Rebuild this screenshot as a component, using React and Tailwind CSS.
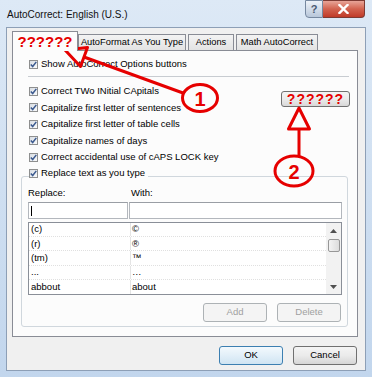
import React from 'react';

const Check = () => (
  <span className="flex h-[9px] w-[9px] shrink-0 items-center justify-center border border-[#8e8f8f] bg-linear-to-br from-[#d8dde3] to-[#fafbfc]">
    <svg width="7" height="7" viewBox="0 0 7 7">
      <path d="M0.8 3.4 L2.7 5.5 L6.3 0.9" fill="none" stroke="#3c5a8f" strokeWidth="1.5" />
    </svg>
  </span>
);

const CheckRow = ({ label }) => (
  <div className="flex h-[16.5px] items-center gap-[3px]">
    <Check />
    <span className="whitespace-nowrap">{label}</span>
  </div>
);

const Tab = ({ label, w, className }) => (
  <div
    className={`flex h-[16px] items-center justify-center whitespace-nowrap border border-b-0 border-[#898c95] bg-linear-to-b from-[#f3f3f3] to-[#e3e3e3] text-[9.3px] ${w} ${className || ''}`}
  >
    {label}
  </div>
);

const rows = [
  ['(c)', '©'],
  ['(r)', '®'],
  ['(tm)', '™'],
  ['...', '…'],
  ['abbout', 'about'],
];

const Annotations = () => (
  <svg className="pointer-events-none absolute left-0 top-0" width="372" height="377" viewBox="0 0 372 377">
    <g fill="none" stroke="#e60000" strokeWidth="3" strokeLinejoin="round">
      {/* arrow 1 */}
      <path d="M65 50 L87.5 47.5 L80.5 66.5 Z" />
      <path d="M84 57 L183 93" />
      <ellipse cx="200" cy="98" rx="17.5" ry="13.5" />
      {/* arrow 2 */}
      <path d="M299 108 L309.5 129 L288.5 129 Z" />
      <path d="M299 129 L299 156" />
      <ellipse cx="294" cy="171" rx="19" ry="15" />
    </g>
    <text x="200" y="105.5" textAnchor="middle" fontFamily="Liberation Sans, Arial, sans-serif" fontWeight="bold" fontSize="20" fill="#e60000">1</text>
    <text x="294" y="178.5" textAnchor="middle" fontFamily="Liberation Sans, Arial, sans-serif" fontWeight="bold" fontSize="20" fill="#e60000">2</text>
  </svg>
);

export default function App() {
  return (
    <div className="relative h-[377px] w-[372px] overflow-hidden bg-linear-to-b from-[#dde9f6] via-[#cfdff1] to-[#c2d6ed] font-['Liberation_Sans',Arial,sans-serif] text-[9.5px] text-black">
      {/* title bar */}
      <div className="flex h-[27px] items-start justify-between px-[7px]">
        <span className="mt-[7px] text-[10px] text-[#111]">AutoCorrect: English (U.S.)</span>
        <div className="flex">
          <div className="flex h-[18px] w-[18px] items-center justify-center rounded-bl-[4px] border border-[#7688a0] bg-linear-to-b from-[#edf2f8] to-[#b8c7da] text-[11px] font-bold text-[#4a5a72]">
            ?
          </div>
          <div className="flex h-[18px] w-[42px] items-center justify-center rounded-br-[4px] border border-l-0 border-[#7d3a33] bg-linear-to-b from-[#e7a498] via-[#d2624f] to-[#c03a28]">
            <svg width="11" height="10" viewBox="0 0 11 10">
              <path d="M1.5 1 L9.5 9 M9.5 1 L1.5 9" stroke="#ffffff" strokeWidth="2.4" strokeLinecap="square" />
            </svg>
          </div>
        </div>
      </div>

      {/* client area */}
      <div className="mx-[6px] h-[344px] border border-[#8d9fb6] bg-[#f0f0f0]">
        {/* tabs */}
        <div className="flex h-[22px] items-end pl-[5px]">
          <div className="relative z-10 -mb-px flex h-[20px] w-[66px] items-center justify-center border border-b-0 border-[#898c95] bg-[#fcfcfc] text-[15px] font-bold leading-none text-[#e60000]">
            ??????
          </div>
          <Tab label="AutoFormat As You Type" w="w-[108px]" />
          <Tab label="Actions" w="w-[46px]" className="ml-[2px]" />
          <Tab label="Math AutoCorrect" w="w-[82px]" className="ml-[2px]" />
        </div>

        {/* tab panel */}
        <div className="ml-[5px] mr-[7px] h-[287px] border border-[#898c95] bg-[#fcfcfc]">
          <div className="pl-[16px] pt-[5px]">
            <div className="flex h-[16px] items-center gap-[3px]">
              <Check />
              <span>Show AutoCorrect Options buttons</span>
            </div>
          </div>
          <div className="ml-[15px] mr-[8px] mt-[4px] h-px bg-[#c8ccd1]" />

          <div className="mt-[6px] flex justify-between">
            <div className="pl-[16px]">
              <CheckRow label="Correct TWo INitial CApitals" />
              <CheckRow label="Capitalize first letter of sentences" />
              <CheckRow label="Capitalize first letter of table cells" />
              <CheckRow label="Capitalize names of days" />
              <CheckRow label="Correct accidental use of cAPS LOCK key" />
            </div>
            <div className="mr-[7px] mt-[8px] flex h-[16px] w-[69px] items-center justify-center rounded-[3px] border border-[#707070] bg-linear-to-b from-[#f4f4f4] via-[#ebebeb] to-[#d8d8d8] text-[14px] font-bold leading-none tracking-[1px] text-[#e60000]">
              ??????
            </div>
          </div>

          {/* replace group */}
          <div className="ml-[8px] mr-[9px] mt-[10.5px] rounded-[3px] border border-[#d0d7dd] pb-[4px]">
            <div className="-mt-[12px] flex h-[16px] pl-[7px]">
              <div className="flex items-center gap-[3px] bg-[#fcfcfc] pr-[3px]">
                <Check />
                <span>Replace text as you type</span>
              </div>
            </div>
            <div className="ml-[6px] mt-[6px] flex h-[12px] items-center">
              <span className="w-[101px]">Replace:</span>
              <span className="pl-[2px]">With:</span>
            </div>
            <div className="ml-[6px] mt-[3px] flex gap-[1px]">
              <div className="flex h-[17px] w-[100px] items-center border border-[#b3b7bd] border-t-[#9a9ea5] bg-white">
                <span className="ml-[2px] h-[10px] w-px bg-black" />
              </div>
              <div className="h-[17px] w-[213px] border border-[#b3b7bd] border-t-[#9a9ea5] bg-white" />
            </div>

            {/* list */}
            <div className="ml-[6px] mt-[3px] flex h-[73px] w-[314px] border border-[#8a8f98] bg-white">
              <div className="flex-1">
                {rows.map(([a, b], i) => (
                  <div key={i} className="flex h-[14.2px] items-center border-b border-dotted border-[#e0e0e0] last:border-b-0">
                    <span className="w-[101px] pl-[2px]">{a}</span>
                    <span className="flex h-full items-center border-l border-[#e4e4e4] pl-[1px]">{b}</span>
                  </div>
                ))}
              </div>
              <div className="flex w-[15px] flex-col items-center bg-[#f2f2f2]">
                <div className="flex h-[15px] items-center justify-center">
                  <svg width="7" height="4" viewBox="0 0 7 4"><path d="M3.5 0 L7 4 L0 4 Z" fill="#505050" /></svg>
                </div>
                <div className="mt-[1px] h-[13px] w-[12px] rounded-[2px] border border-[#979797] bg-linear-to-r from-[#f3f3f3] to-[#dcdcdc]" />
                <div className="flex-1" />
                <div className="flex h-[15px] items-center justify-center">
                  <svg width="7" height="4" viewBox="0 0 7 4"><path d="M0 0 L7 0 L3.5 4 Z" fill="#505050" /></svg>
                </div>
              </div>
            </div>

            <div className="mr-[6px] mt-[8px] flex justify-end gap-[10px]">
              <div className="flex h-[19px] w-[64px] items-center justify-center rounded-[3px] border border-[#adb2b5] bg-[#f4f4f4] text-[#a0a0a0]">
                Add
              </div>
              <div className="flex h-[19px] w-[64px] items-center justify-center rounded-[3px] border border-[#adb2b5] bg-[#f4f4f4] text-[#a0a0a0]">
                Delete
              </div>
            </div>
          </div>
        </div>

        {/* dialog buttons */}
        <div className="mr-[8px] mt-[9px] flex justify-end gap-[10px]">
          <div className="flex h-[19px] w-[64px] items-center justify-center rounded-[3px] border border-[#3c7fb1] bg-linear-to-b from-[#f3f9fd] via-[#e2eff8] to-[#cfe4f2]">
            OK
          </div>
          <div className="flex h-[19px] w-[64px] items-center justify-center rounded-[3px] border border-[#707070] bg-linear-to-b from-[#f4f4f4] via-[#ebebeb] to-[#d6d6d6]">
            Cancel
          </div>
        </div>
      </div>

      <Annotations />
    </div>
  );
}
